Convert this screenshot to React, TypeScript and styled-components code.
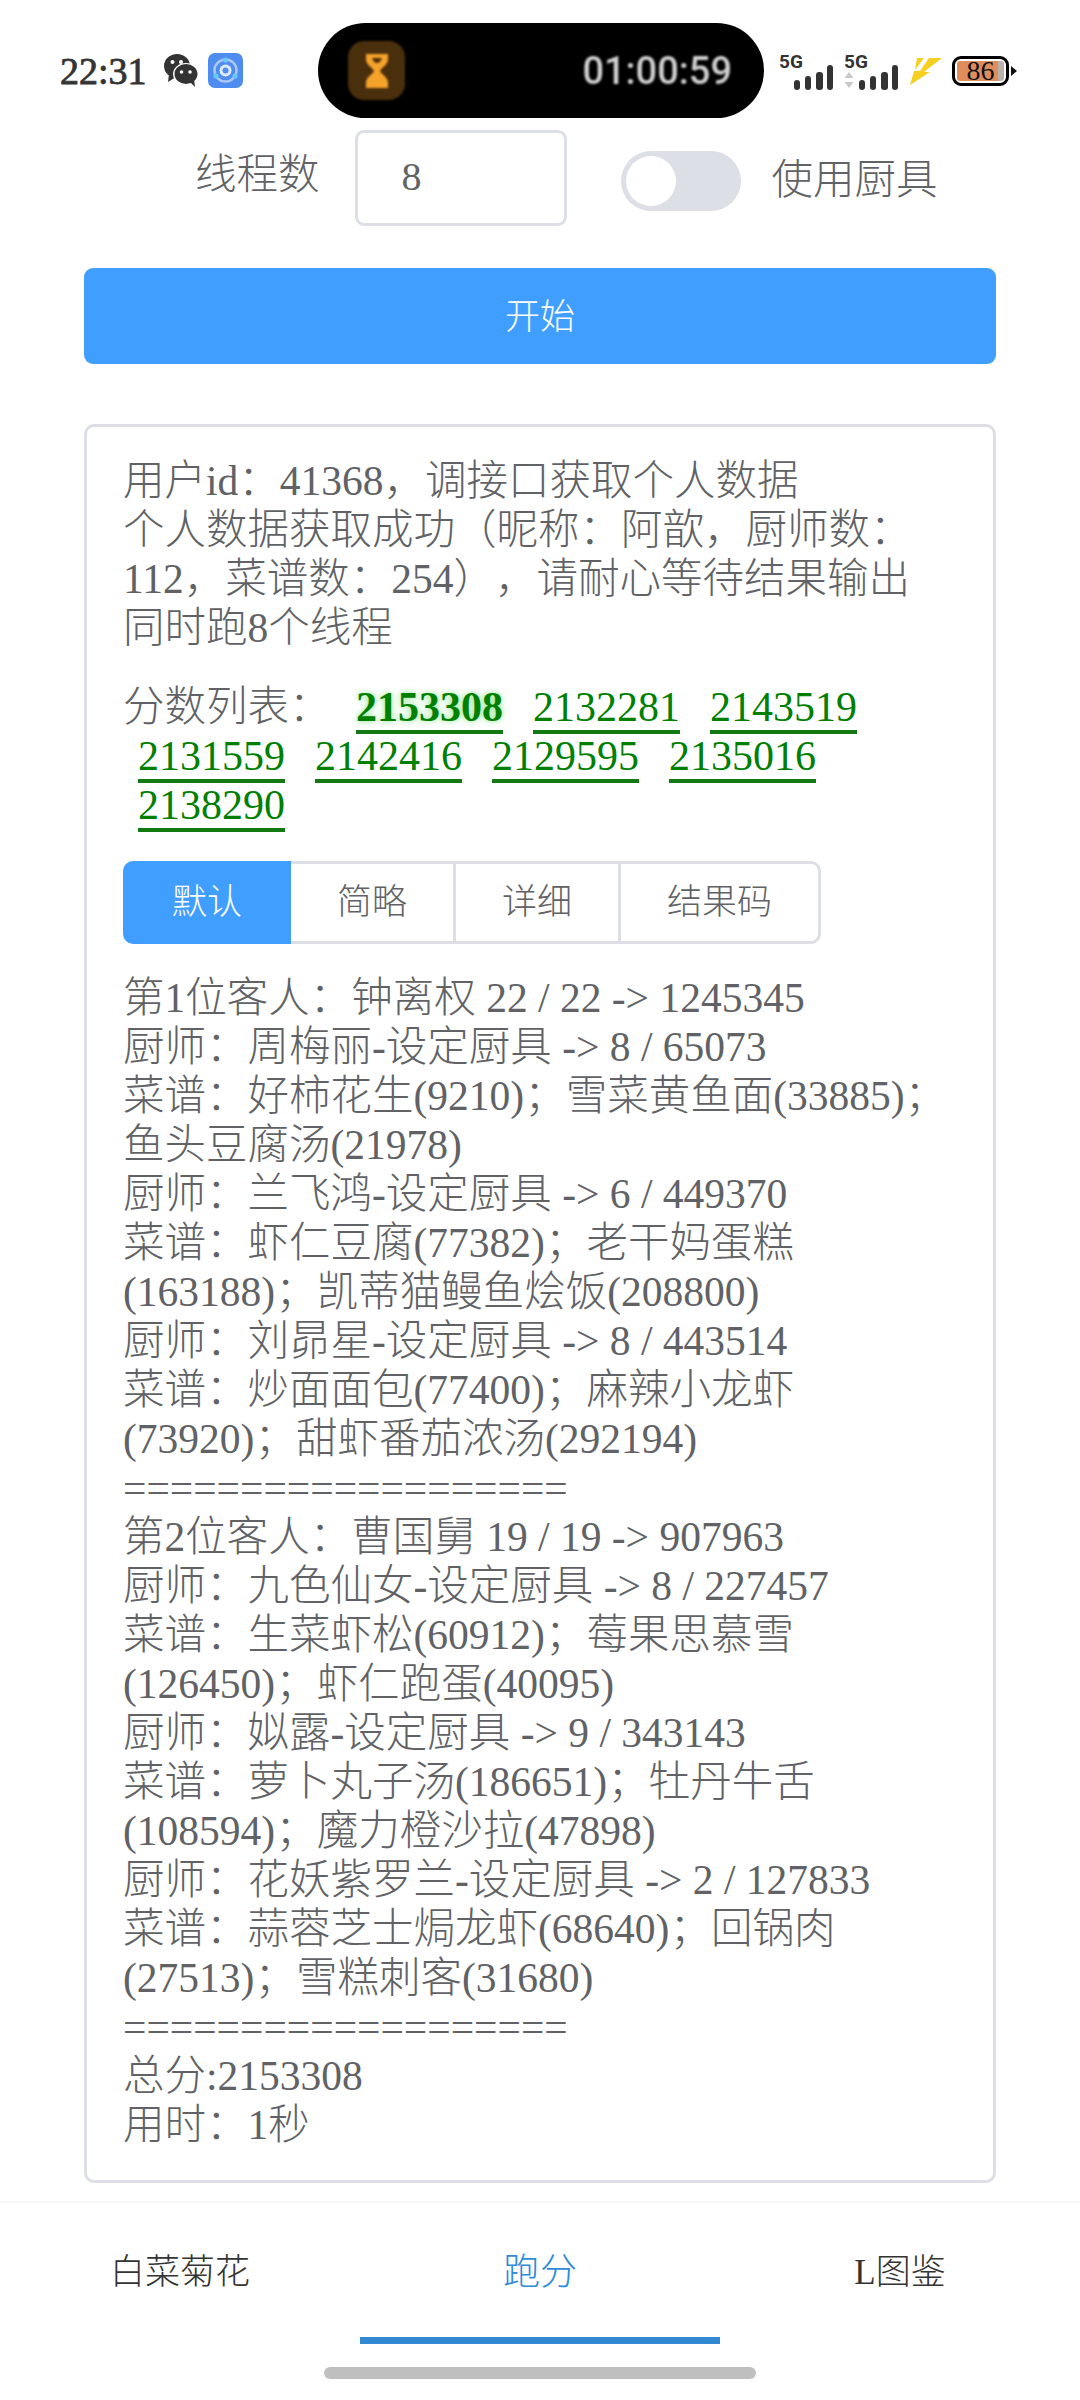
import * as React from "react";
import styled, { createGlobalStyle } from "styled-components";

const GlobalStyle = createGlobalStyle`
  html, body {
    margin: 0;
    padding: 0;
    background: #fff;
  }
  body {
    font-family: "Liberation Serif", "Noto Sans CJK SC", serif;
    font-weight: 300;
    color: #606266;
    text-spacing-trim: space-all;
  }
`;

const Page = styled.div`
  width: 1080px;
  height: 2400px;
  overflow: hidden;
  display: flex;
  flex-direction: column;
`;

const StatusBar = styled.div`
  display: flex;
  align-items: center;
  height: 95px;
  margin-top: 23px;
  padding-left: 60px;
`;

const Clock = styled.span`
  width: 103px;
  font-size: 38px;
  color: #333;
  -webkit-text-stroke: 0.8px #333;
`;

const AppIcons = styled.div`
  display: flex;
  align-items: center;
  gap: 9px;
  width: 155px;
`;

const Island = styled.div`
  width: 446px;
  height: 95px;
  border-radius: 48px;
  background: #000;
  display: flex;
  align-items: center;
  justify-content: space-between;
  padding: 0 32px 0 30px;
  box-sizing: border-box;
`;

const TimerIcon = styled.div`
  width: 57px;
  height: 59px;
  border-radius: 16px;
  background: #4a2f0c;
  filter: blur(1px);
  display: flex;
  align-items: center;
  justify-content: center;
`;

const TimerText = styled.span`
  font-family: Roboto, sans-serif;
  font-size: 38px;
  font-weight: 500;
  color: #d0d0d0;
  filter: blur(0.8px);
`;

const StatusRight = styled.div`
  display: flex;
  align-items: center;
  gap: 9px;
  margin-left: 15px;
`;

const Battery = styled.div`
  display: flex;
  align-items: center;
  margin-left: 1px;

  &::after {
    content: "";
    border-left: 6px solid #111;
    border-top: 5px solid transparent;
    border-bottom: 5px solid transparent;
    margin-left: 2px;
  }
`;

const BatteryShell = styled.div`
  width: 57px;
  height: 30px;
  box-sizing: border-box;
  border: 3px solid #000;
  border-radius: 9px;
  padding: 2px;
  display: flex;
`;

const BatteryFill = styled.div`
  flex: 1;
  border-radius: 3px;
  background: linear-gradient(90deg, #e08d5e 0 88%, #b9b1aa 88% 100%);
  color: #111;
  font-size: 28px;
  font-weight: 400;
  line-height: 20px;
  text-align: center;
`;

const ThreadRow = styled.div`
  display: flex;
  align-items: center;
  margin-top: 12px;
  padding-left: 195px;
`;

const FieldLabel = styled.label<{ $up?: number; $down?: number }>`
  font-size: 41.5px;
  line-height: 49px;
  margin-top: ${(p) => p.$down ?? 0}px;
  margin-bottom: ${(p) => p.$up ?? 0}px;
`;

const ThreadInput = styled.div`
  width: 212px;
  height: 96px;
  box-sizing: border-box;
  margin: 0 54px 0 35px;
  border: 3px solid #dcdfe6;
  border-radius: 9px;
  padding-left: 44px;
  font-size: 40px;
  line-height: 88px;
`;

const Switch = styled.div`
  width: 120px;
  height: 60px;
  box-sizing: border-box;
  margin: 6px 31px 0 0;
  padding: 5px;
  border-radius: 30px;
  background: #dcdfe6;
`;

const SwitchKnob = styled.div`
  width: 50px;
  height: 50px;
  border-radius: 50%;
  background: #fff;
`;

const StartButton = styled.button`
  display: block;
  width: 912px;
  height: 96px;
  margin: 42px 0 0 84px;
  padding: 0 0 6px;
  border: 0;
  border-radius: 9px;
  background: #409eff;
  color: #fff;
  font-family: inherit;
  font-weight: 300;
  font-size: 35px;
`;

const Panel = styled.div`
  width: 912px;
  box-sizing: border-box;
  margin: 60px 0 0 84px;
  padding: 30px 38px 30px 36px;
  border: 3px solid #dcdfe6;
  border-radius: 10px;
  font-size: 41.5px;
  line-height: 49px;
`;

const LogLine = styled.div`
  word-break: normal;
`;

const ScoreList = styled.div`
  margin-top: 30px;
`;

const Score = styled.span<{ $best?: boolean }>`
  margin: 0 15px;
  font-size: 42px;
  color: green;
  border-bottom: 4px solid #137a13;
  font-weight: ${(p) => (p.$best ? 700 : 400)};
  text-shadow: ${(p) => (p.$best ? "0 0 6px #7fe07f" : "none")};
`;

const Tabs = styled.div`
  display: inline-flex;
  height: 83px;
  margin: 31px 0 30px;
  vertical-align: top;
`;

const TabButton = styled.div<{ $active?: boolean }>`
  box-sizing: border-box;
  padding: 0 46px;
  border: 3px solid ${(p) => (p.$active ? "#409eff" : "#dcdfe6")};
  border-left-width: ${(p) => (p.$active ? 3 : 0)}px;
  background: ${(p) => (p.$active ? "#409eff" : "#fff")};
  color: ${(p) => (p.$active ? "#fff" : "#606266")};
  font-size: 35px;
  line-height: 77px;

  &:first-child {
    border-radius: 10px 0 0 10px;
  }
  &:last-child {
    border-radius: 0 10px 10px 0;
  }
`;

const BottomNav = styled.div`
  display: grid;
  grid-template-columns: repeat(3, 360px);
  height: 143px;
  margin-top: 18px;
  border-top: 2px solid #f7f7f7;
  box-sizing: border-box;
`;

const NavTab = styled.div<{ $active?: boolean }>`
  box-sizing: border-box;
  padding-top: 49px;
  text-align: center;
  font-size: ${(p) => (p.$active ? 37 : 35)}px;
  line-height: 42px;
  color: ${(p) => (p.$active ? "#2d8cd9" : "#333")};
  border-bottom: 7px solid ${(p) => (p.$active ? "#3088d0" : "transparent")};
`;

const HomeBar = styled.div`
  width: 432px;
  height: 12px;
  margin: 23px auto 0;
  border-radius: 6px;
  background: #bfbfbf;
`;

const WeChatIcon = () => (
  <svg width="36" height="35" viewBox="0 0 36 35">
    <ellipse cx="14" cy="13" rx="13" ry="12" fill="#333" />
    <path d="M6 21 L5 29 L13 24 Z" fill="#333" />
    <circle cx="9.5" cy="9" r="2" fill="#fff" />
    <circle cx="18" cy="9" r="2" fill="#fff" />
    <ellipse cx="23" cy="21" rx="13" ry="11" fill="#fff" />
    <ellipse cx="23" cy="21" rx="11.5" ry="10" fill="#333" />
    <path d="M27 29 L32 34 L31 26 Z" fill="#333" />
    <circle cx="18.5" cy="19" r="1.8" fill="#fff" />
    <circle cx="27" cy="19" r="1.8" fill="#fff" />
  </svg>
);

const SyncAppIcon = () => (
  <svg width="35" height="35" viewBox="0 0 35 35">
    <rect width="35" height="35" rx="7" fill="#4f8cf0" />
    <circle cx="17.5" cy="17.5" r="11" fill="none" stroke="#a9c8f8" strokeWidth="2.5" />
    <circle cx="17.5" cy="17.5" r="6" fill="#dfeafd" />
    <circle cx="17.5" cy="17.5" r="3" fill="#4f8cf0" />
    <circle cx="17.5" cy="7" r="2.6" fill="#66c8f5" />
    <circle cx="8" cy="23" r="2.6" fill="#66c8f5" />
    <circle cx="27" cy="23" r="2.6" fill="#66c8f5" />
  </svg>
);

const HourglassIcon = () => (
  <svg width="24" height="34" viewBox="0 0 24 34">
    <path
      d="M1 0 H23 V5 C23 11 17 13 15 17 C17 21 23 23 23 29 V34 H1 V29 C1 23 7 21 9 17 C7 13 1 11 1 5 Z"
      fill="#f5a32a"
    />
    <path d="M7 4 H17 C16 7 14 9 12 9 C10 9 8 7 7 4 Z" fill="#4a2f0c" />
  </svg>
);

const SignalIcon = ({ arrows }: { arrows?: boolean }) => (
  <svg width="56" height="42" viewBox="0 0 56 42">
    <text x="0" y="18" fontFamily="Roboto, sans-serif" fontWeight="700" fontSize="19" fill="#333">
      5G
    </text>
    {arrows && <path d="M5 22 L9.5 28 H0.5 Z M5 38 L0.5 32 H9.5 Z" fill="#c9c9c9" />}
    <rect x="15" y="30" width="6" height="10" rx="3" fill="#333" />
    <rect x="26" y="26" width="6" height="14" rx="3" fill="#333" />
    <rect x="37" y="22" width="7" height="18" rx="3" fill="#333" />
    <rect x="48" y="15" width="6" height="25" rx="3" fill="#333" />
  </svg>
);

const BoltIcon = () => (
  <svg width="33" height="28" viewBox="0 0 33 28">
    <path d="M8 1 H15 L6 13 Z" fill="#f6cf20" />
    <path d="M20 1 H33 L15 15 L21 15 L1 28 L5 14 L11 14 Z" fill="#f6cf20" />
  </svg>
);

const firstBlock = [
  "用户id：41368，调接口获取个人数据",
  "个人数据获取成功（昵称：阿歆，厨师数：112，菜谱数：254），请耐心等待结果输出",
  "同时跑8个线程",
];

const scores = [2153308, 2132281, 2143519, 2131559, 2142416, 2129595, 2135016, 2138290];

const tabs = ["默认", "简略", "详细", "结果码"];

const results = [
  "第1位客人：钟离权 22 / 22 -> 1245345",
  "厨师：周梅丽-设定厨具 -> 8 / 65073",
  "菜谱：好柿花生(9210)；雪菜黄鱼面(33885)；鱼头豆腐汤(21978)",
  "厨师：兰飞鸿-设定厨具 -> 6 / 449370",
  "菜谱：虾仁豆腐(77382)；老干妈蛋糕(163188)；凯蒂猫鳗鱼烩饭(208800)",
  "厨师：刘昴星-设定厨具 -> 8 / 443514",
  "菜谱：炒面面包(77400)；麻辣小龙虾(73920)；甜虾番茄浓汤(292194)",
  "===================",
  "第2位客人：曹国舅 19 / 19 -> 907963",
  "厨师：九色仙女-设定厨具 -> 8 / 227457",
  "菜谱：生菜虾松(60912)；莓果思慕雪(126450)；虾仁跑蛋(40095)",
  "厨师：姒露-设定厨具 -> 9 / 343143",
  "菜谱：萝卜丸子汤(186651)；牡丹牛舌(108594)；魔力橙沙拉(47898)",
  "厨师：花妖紫罗兰-设定厨具 -> 2 / 127833",
  "菜谱：蒜蓉芝士焗龙虾(68640)；回锅肉(27513)；雪糕刺客(31680)",
  "===================",
  "总分:2153308",
  "用时：1秒",
];

const App = () => (
  <Page>
    <GlobalStyle />
    <StatusBar>
      <Clock>22:31</Clock>
      <AppIcons>
        <WeChatIcon />
        <SyncAppIcon />
      </AppIcons>
      <Island>
        <TimerIcon>
          <HourglassIcon />
        </TimerIcon>
        <TimerText>01:00:59</TimerText>
      </Island>
      <StatusRight>
        <SignalIcon />
        <SignalIcon arrows />
        <BoltIcon />
        <Battery>
          <BatteryShell>
            <BatteryFill>86</BatteryFill>
          </BatteryShell>
        </Battery>
      </StatusRight>
    </StatusBar>

    <ThreadRow>
      <FieldLabel $up={6}>线程数</FieldLabel>
      <ThreadInput>8</ThreadInput>
      <Switch>
        <SwitchKnob />
      </Switch>
      <FieldLabel $down={4}>使用厨具</FieldLabel>
    </ThreadRow>

    <StartButton>开始</StartButton>

    <Panel>
      {firstBlock.map((line) => (
        <LogLine key={line}>{line}</LogLine>
      ))}
      <ScoreList>
        分数列表：{" "}
        {scores.map((score, i) => (
          <React.Fragment key={score}>
            <Score $best={i === 0}>{score}</Score>
            <wbr />
          </React.Fragment>
        ))}
      </ScoreList>
      <Tabs>
        {tabs.map((tab, i) => (
          <TabButton key={tab} $active={i === 0}>
            {tab}
          </TabButton>
        ))}
      </Tabs>
      {results.map((line, i) => (
        <LogLine key={i}>{line}</LogLine>
      ))}
    </Panel>

    <BottomNav>
      <NavTab>白菜菊花</NavTab>
      <NavTab $active>跑分</NavTab>
      <NavTab>L图鉴</NavTab>
    </BottomNav>
    <HomeBar />
  </Page>
);

export default App;
